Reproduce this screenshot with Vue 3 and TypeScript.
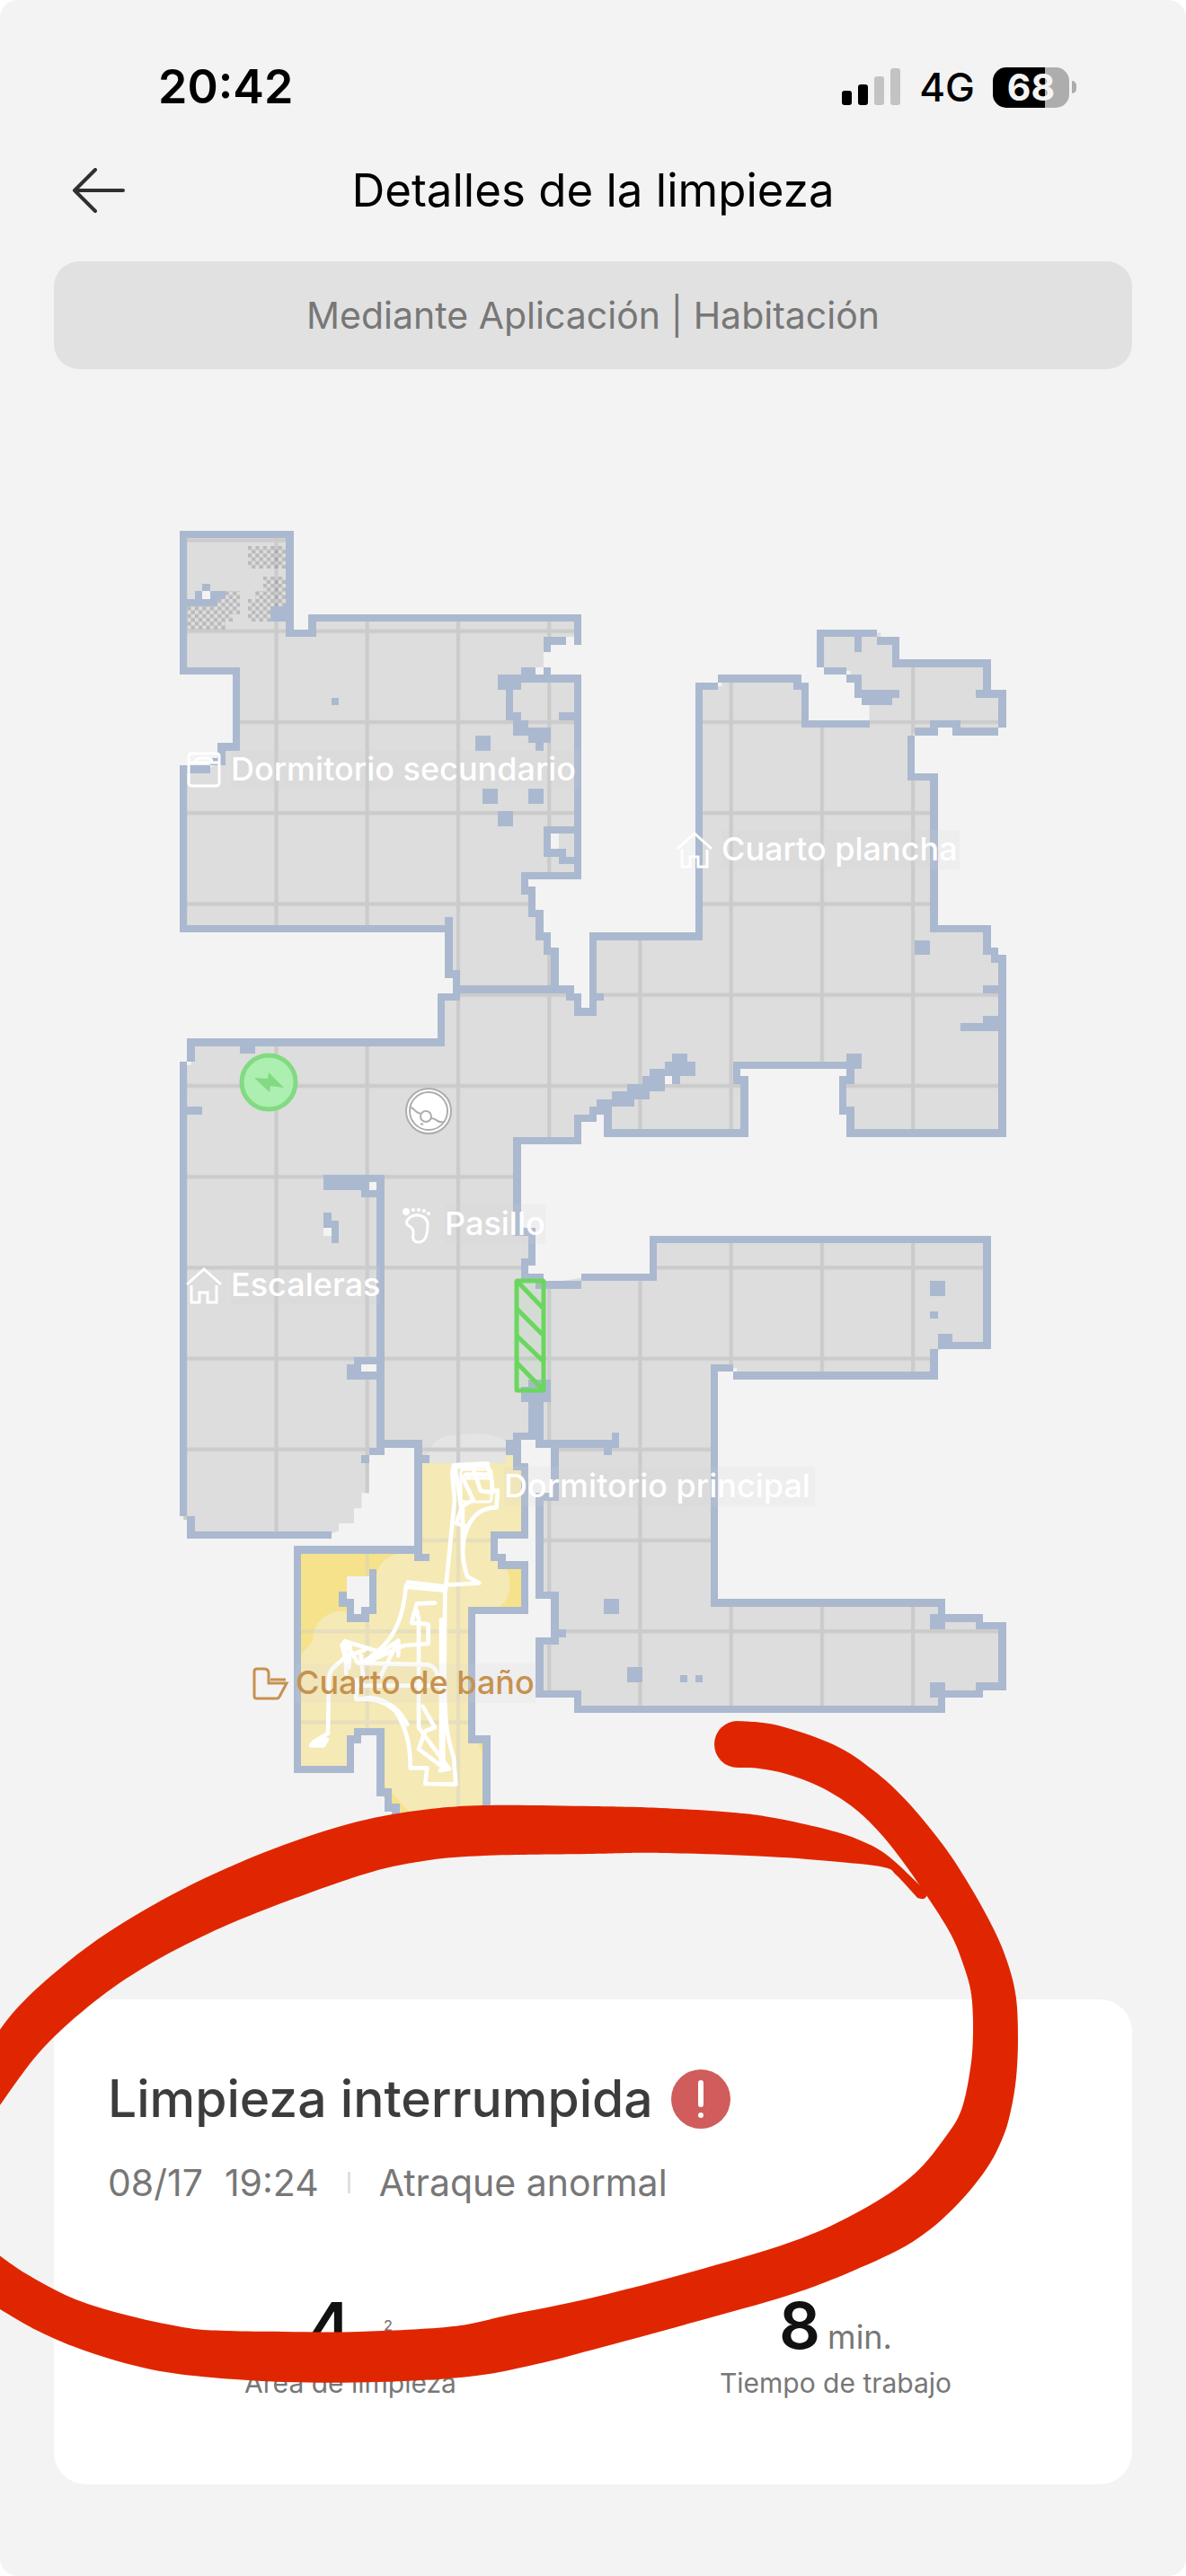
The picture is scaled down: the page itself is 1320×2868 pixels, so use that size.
<script setup lang="ts">
type Point = [number, number]

interface RoomLabel {
  text: string
  x: number
  y: number
  width: number
  icon: 'house' | 'bed' | 'foot' | 'bath'
  iconX: number
  iconY: number
  active?: boolean
}

// Floors and walls are given in map cells; a wall runs through cell centres.
const homeFloors: string[] = [
  '0,0 14,0 14,13 17,13 17,11 52,11 52,13.5 50,13.5 48,14 48,15 47.5,15 47.5,17.5 46,18 46,19 52,19 52,45 45,45 45,47 46,47 46,50 47,50 47,53 48,53 48,55 49,55 49,60 36,60 36,58 35,58 35,52 0,52 0,31 3,31 5,30 5,28 7,28 7,18 0,18',
  '34,61 36,61 36,60 51,60 51,61 52,61 52,63 54,63 54,53 68,53 68,20 71,20 71,19 81,19 81,20 82,20 82,25 90.5,25 90.5,22 90,21 89,21 89,19 88,19 88,18 85,18 84,17 84,13 92,13 92,14 94,14 94,17 106,17 106,21 108,21 108,25.5 102,25.5 102,25 99,25 99,26 96.5,26 96,27 96,32 99,32 99,52 106,52 106,55 107,55 107,56 108,56 108,79 88,79 88,76 87,76 87,72 88,72 88,70 73,70 73,72 74,72 74,79 56,79 56,75 54,76 54,77 52,77 52,80 44,80 44,92 46,92 46,96 45,96 45,98 47,98 47,99 53,98 62,98 62,93 106,93 106,107 101,107 99,108 99,111 73,111 73,110 70,110 70,141 100,141 100,143 105,143 105,144 108,144 108,152 105,152 105,153 100,153 100,155 52,155 52,153 47,153 47,146 49,146 49,140 47,140 47,127 49,127 49,120 47,120 46,119 44,119 44,122.5 31,122.5 31,120 26,120 26,121 24.5,121.5 24.5,126.5 23.5,126.5 23.5,128.5 22.5,128.5 22.5,130.5 20.5,130.5 20.5,131.5 19,132 1,132 1,130 0,130 0,70 1,70 1,67 34,67',
]

const bathFloor =
  '31,122.5 42.5,122.5 42.5,121.5 44,121.5 44,123 45,123 45,132 41,132 41,135 42,135 42,136 45,136 45,142 38,142 38,159 40,159 40,172 28,170 28,168 27,167 26,166 26,158 23,158 22,159 22,163 15,163 15,134 31,134'

const walls: string[] = [
  '3,31 0,31 0,52 35,52',
  '4,30 5,30 5,28 7,28 7,18 0,18 0,0 14,0 14,13 17,13 17,11 52,11 52,14',
  '50,14 48,14 48,15',
  '46,18 46,19',
  '45,18 45,19',
  '48,18 48,19',
  '42,19 52,19 52,45 45,45 45,47 46,47 46,50 47,50 47,53 48,53 48,55 49,55 49,60',
  '42,19 42,20 44,20',
  '43,20 43,24 44,24 44,26 45,26 45,25',
  '46,26 48,26 48,27 46,27',
  '47,27 47,28',
  '50,24 52,24',
  '52,39 48,39 48,42 50,42 50,43 52,43',
  '35,51 35,58 36,58 36,61 34,61 34,67 1,67 1,69',
  '0,70 0,129',
  '36,60 51,60 51,61 52,61 52,63 54,63 54,53 68,53 68,20 70,20',
  '54,61 55,61',
  '71,19 81,19 81,20 82,20 82,25 90,25',
  '85,18 87,18',
  '88,19 89,19 89,21 94,21',
  '90,22 93,22',
  '84,17 84,13 91,13',
  '89,13 89,15',
  '92,14 94,14 94,17 106,17 106,21',
  '105,21 108,21 108,25',
  '97,26 99,26 99,25 102,25 102,26 107,26',
  '96,27 96,32 99,32 99,52 106,52 106,55 107,55 107,56 108,56 108,79 88,79 88,76 87,76 87,72 88,72 88,70',
  '106,60 108,60',
  '106,64 108,64',
  '103,65 108,65',
  '88,69 89,69 89,70 73,70 73,72 74,72 74,79 56,79 56,76',
  '65,69 66,69',
  '64,70 67,70 67,71 62,71',
  '65,71 65,72',
  '61,72 63,72 63,73 59,73',
  '57,74 61,74',
  '55,75 59,75',
  '54,76 55,76',
  '54,76 54,77 52,77 52,80 44,80 44,92 46,92 46,96 45,96 45,98 47,98 47,99 52,99',
  '53,98 62,98 62,93 106,93 106,107 100,107 100,106 101,106',
  '99,108 99,111 73,111',
  '72,110 70,110 70,141 100,141 100,143 105,143 105,144 108,144 108,152 105,152 105,153 100,153 100,155 52,155 52,153 47,153 47,146 49,146 49,140 47,140 47,127 49,127 49,120',
  '99,143 99,144 100,144',
  '99,153 99,152 100,152',
  '49,145 50,145',
  '47,120 57,120 57,119',
  '56,120 56,121',
  '46,112 48,112 48,114 45,114 45,113 48,113',
  '46,114 46,119',
  '47,114 47,120',
  '44,119 46,119',
  '44,119 44,123 45,123 45,132 41,132 41,135 42,135 42,136 45,136 45,142 38,142 38,159 40,159 40,172 28,170 28,168 27,168 27,166 26,166 26,158 23,158 23,159 22,159 22,163 15,163 15,134 31,134',
  '43,120 43,121',
  '26,120 31,120 31,135 32,135',
  '32,122 31,122',
  '19,85 26,85 26,121 25,121',
  '19,86 24,86',
  '24,87 26,87',
  '19,90 19,91',
  '20,91 20,93',
  '26,109 23,109 23,110 22,110 22,111 26,111',
  '8,68 9,68',
  '1,76 2,76',
  '1,130 1,132 19,132',
  '25,137 25,142 24,142 24,143 22,143 22,141 21,141 21,140',
]

// Obstacles: column, row, width, height
const blocks: number[][] = [
  [3, 7, 1, 1], [2, 8, 1, 1], [4, 8, 2, 1], [1, 9, 4, 1], [12, 10, 2, 2],
  [20, 22, 1, 1], [39, 27, 2, 2], [40, 34, 2, 2], [46, 34, 2, 2], [42, 37, 2, 2],
  [97, 54, 2, 2], [24, 122, 1, 1], [99, 99, 2, 2], [99, 103, 1, 1],
  [56, 141, 2, 2], [59, 150, 2, 2], [66, 151, 1, 1], [68, 151, 1, 1],
]

// Unmapped spots inside a floor
const holes: number[][] = [
  [3, 8, 1, 1], [47, 18, 1, 1], [49, 40, 1, 2], [64, 72, 1, 1], [51, 14, 1, 1],
  [25, 86, 1, 1], [19, 92, 1, 1], [24, 110, 2, 1], [22, 138, 3, 3], [22, 140, 3, 1], [23, 141, 2, 1], [23, 142, 1, 1],
]

const carpets: string[] = [
  '9,2 14,2 14,5 9,5',
  '11,6 14,6 14,10 12,10 12,12 9,12 9,9 10,9 10,8 11,8',
  '5,9 6,9 6,8 8,8 8,11 7,11 7,12 6,12 6,13 1,13 1,10 5,10',
]

const labels: RoomLabel[] = [
  { text: 'Dormitorio secundario', x: 257, y: 869, width: 388, icon: 'bed', iconX: 208, iconY: 837 },
  { text: 'Cuarto plancha', x: 803, y: 958, width: 265, icon: 'house', iconX: 753, iconY: 925 },
  { text: 'Pasillo', x: 495, y: 1375, width: 112, icon: 'foot', iconX: 446, iconY: 1344 },
  { text: 'Escaleras', x: 257, y: 1443, width: 166, icon: 'house', iconX: 207, iconY: 1410 },
  { text: 'Dormitorio principal', x: 561, y: 1667, width: 346, icon: 'bed', iconX: 511, iconY: 1634 },
  { text: 'Cuarto de baño', x: 329, y: 1886, width: 268, icon: 'bath', iconX: 281, iconY: 1856, active: true },
]

const stats = [
  { value: '4', unit: 'm', power: '2', label: 'Área de limpieza' },
  { value: '8', unit: 'min.', power: '', label: 'Tiempo de trabajo' },
]

function curve(points: Point[]): string {
  let d = ''
  for (let i = 0; i < points.length - 1; i++) {
    const p0 = points[Math.max(i - 1, 0)]
    const p1 = points[i]
    const p2 = points[i + 1]
    const p3 = points[Math.min(i + 2, points.length - 1)]
    const a = [p1[0] + (p2[0] - p0[0]) / 6, p1[1] + (p2[1] - p0[1]) / 6]
    const b = [p2[0] - (p3[0] - p1[0]) / 6, p2[1] - (p3[1] - p1[1]) / 6]
    d += `C${a[0].toFixed(1)} ${a[1].toFixed(1)} ${b[0].toFixed(1)} ${b[1].toFixed(1)} ${p2[0]} ${p2[1]}`
  }
  return d
}

const sweepOuter: Point[] = [
  [821, 1916], [866, 1921], [929, 1943], [972, 1971], [1009, 2005], [1051, 2056], [1082, 2104], [1108, 2152],
  [1123, 2190], [1131, 2225], [1133, 2270], [1131, 2313], [1125, 2350], [1116, 2380], [1097, 2416], [1060, 2460],
  [1014, 2497], [950, 2528], [879, 2555], [770, 2586], [660, 2616], [589, 2634], [522, 2646], [421, 2652],
  [316, 2652], [236, 2647], [168, 2638], [97, 2618], [42, 2595], [-10, 2565],
]
const sweepInner: Point[] = [
  [-10, 2504], [30, 2532], [84, 2560], [147, 2579], [210, 2592], [252, 2595], [316, 2596], [400, 2596],
  [505, 2590], [568, 2577], [660, 2558], [782, 2526], [892, 2492], [967, 2456], [1018, 2420], [1051, 2381],
  [1070, 2349], [1080, 2303], [1083, 2263], [1081, 2220], [1072, 2187], [1058, 2153], [1031, 2110], [1003, 2070], [976, 2037],
  [948, 2011], [912, 1989], [875, 1975], [845, 1969], [821, 1968],
]
const bandUpper: Point[] = [
  [-10, 2274], [17, 2238], [59, 2198], [118, 2153], [202, 2104], [295, 2062], [387, 2031], [463, 2016],
  [539, 2010], [660, 2011], [736, 2013], [816, 2018], [862, 2024], [921, 2037], [955, 2048], [988, 2066], [1032, 2107],
]
const bandLower: Point[] = [
  [1021, 2113], [998, 2088], [984, 2079], [934, 2073], [854, 2067], [736, 2063], [660, 2064], [539, 2066],
  [471, 2072], [404, 2087], [295, 2126], [223, 2157], [156, 2193], [97, 2235], [42, 2287], [-10, 2358],
]

const sweep = `M821 1916${curve(sweepOuter)}L-10 2504${curve(sweepInner)}A26 26 0 0 1 821 1916Z`
const band = `M-10 2274${curve(bandUpper)}Q1032 2117 1021 2113${curve(bandLower)}Z`

const goBack = () => window.history.back()
</script>

<template>
  <div class="backdrop">
    <main class="page">
      <div class="status-bar">
        <span class="clock">20:42</span>
        <div class="status-icons">
          <svg class="signal" width="66" height="42" viewBox="0 0 66 42" aria-hidden="true">
            <rect x="0" y="25" width="11" height="16" rx="3" />
            <rect x="18" y="18" width="11" height="23" rx="3" />
            <rect class="off" x="36" y="9" width="11" height="32" rx="3" />
            <rect class="off" x="54" y="0" width="11" height="41" rx="3" />
          </svg>
          <span class="network">4G</span>
          <span class="battery"><span class="battery-body">68</span><span class="battery-tip"></span></span>
        </div>
      </div>

      <header class="header">
        <button class="back" type="button" aria-label="Atrás" @click="goBack">
          <svg width="60" height="50" viewBox="0 0 60 50" aria-hidden="true">
            <path d="M57 25H3M26 2L3 25l23 23" />
          </svg>
        </button>
        <h1>Detalles de la limpieza</h1>
      </header>

      <p class="mode">Mediante Aplicación | Habitación</p>

      <svg class="map" viewBox="0 411 1320 1815" role="img" aria-label="Mapa de limpieza">
        <defs>
          <pattern id="grid" width="12" height="12" patternUnits="userSpaceOnUse">
            <path class="grid-line" d="M0 0h.5v12H0zM0 .5h12v.5H0z" />
          </pattern>
          <pattern id="carpet" width="1" height="1" patternUnits="userSpaceOnUse">
            <path d="M0 0h.5v.5H0zM.5 .5h.5v.5H.5z" fill="#000000" fill-opacity="0.16" />
          </pattern>
        </defs>

        <g transform="translate(204.2 595.2) scale(8.436)">
          <polygon v-for="(p, i) in homeFloors" :key="'f' + i" class="floor" :points="p" />
          <polygon class="floor-bath" :points="bathFloor" />
        </g>

        <g transform="translate(260 1570) scale(0.3333)">
          <path class="swept" d="M630 177L645 150C660 110 690 85 730 85C780 78 870 70 908 104V177Z" />
          <path class="missed" d="M220 475H560C505 488 476 520 477 570V680L350 672C295 680 265 720 265 770C240 800 228 810 220 830ZM910 525H965V662H885C932 620 930 570 910 525ZM500 1250C530 1270 560 1320 590 1342H540L500 1290ZM816 1110H836V1190C834 1160 830 1140 816 1110ZM836 1300L820 1330H836Z" />
        </g>

        <g transform="translate(204.2 595.2) scale(8.436)">
          <polygon v-for="(p, i) in homeFloors" :key="'g' + i" fill="url(#grid)" :points="p" />
          <polygon class="bath-grid" fill="url(#grid)" :points="bathFloor" />
          <g transform="translate(-0.5 -0.5)" shape-rendering="crispEdges">
            <polygon v-for="(p, i) in carpets" :key="'c' + i" fill="url(#carpet)" :points="p" />
            <rect v-for="(h, i) in holes" :key="'h' + i" class="hole" :x="h[0]" :y="h[1]" :width="h[2]" :height="h[3]" />
            <rect v-for="(b, i) in blocks" :key="'b' + i" class="block" :x="b[0]" :y="b[1]" :width="b[2]" :height="b[3]" />
          </g>
          <g class="walls" shape-rendering="crispEdges">
            <polyline v-for="(w, i) in walls" :key="'w' + i" :points="w" />
          </g>
        </g>

        <g class="trail" transform="translate(260 1570) scale(0.3333)">
          <path d="M848 178L735 184L730 210L738 300L708 600M740 190L848 184L862 235L865 270L882 268L878 325C830 325 800 350 782 390L744 378L760 330L742 200M765 320V460M782 390C760 440 762 500 780 555L820 578L708 584" />
          <path d="M765 225L800 300L765 320M800 195L825 270L865 275M775 215H850M708 584L702 602L575 590L582 575L700 588M575 590C568 680 540 760 480 805L372 772L362 785L372 825C350 850 318 860 318 900L315 1080L268 1108L258 1120H300L312 1100L270 1110" />
          <path d="M706 600L704 900C706 1060 715 1100 735 1160L742 1250L640 1248L646 1195H590C592 1110 570 1050 540 1005C510 975 470 960 410 966V920H700M693 700V1180L720 1198L690 1204M700 700V1180" />
          <path d="M672 644L612 646L594 710L650 715V780L570 786L440 845L550 770V820M550 770L490 890M372 825L440 800M372 772L415 845L640 850C670 850 680 870 682 900M612 670L618 700V1060L720 1198M632 990L672 1060L640 1072L618 1132L695 1190M372 780L376 880M390 780L385 860M425 820L432 890M410 900V966L455 960C520 965 560 1010 580 1050M482 805L430 845" />
        </g>

        <g class="hatch">
          <rect x="575" y="1426" width="30" height="122" rx="1" />
          <path d="M577 1428L604 1456M575 1457L604 1486M575 1487L604 1515M575 1517L604 1547" />
        </g>

        <g class="dock">
          <circle cx="299" cy="1205" r="30" />
          <path d="M283 1200L298 1201L299 1194L316 1211L301 1209L300 1216Z" />
        </g>

        <g class="robot">
          <circle cx="477" cy="1237" r="25" />
          <circle cx="477" cy="1237" r="21" />
          <path d="M457 1233C462 1234 460 1238 468 1240M480 1245C487 1245 486 1251 494 1249M468 1251L471 1252" />
          <circle cx="474" cy="1243" r="6" />
        </g>

        <g v-for="l in labels" :key="l.text" :class="['room', { active: l.active }]">
          <rect class="room-bg" :x="l.x" :y="l.y - 34" :width="l.width" height="44" />
          <g :transform="`translate(${l.iconX} ${l.iconY})`">
            <path v-if="l.icon === 'house'" d="M1 20L20 3L39 20M6 21V40H15V29H24V40H34V21" />
            <path v-else-if="l.icon === 'bed'" d="M5 2H33Q36 2 36 5V34Q36 38 32 38H6Q2 38 2 34V5Q2 2 5 2ZM2 12H36M10 12Q10 7 15 7H23Q28 7 28 12" />
            <path v-else-if="l.icon === 'bath'" d="M5 2H13Q18 2 18 7V18H38L30 33Q29 35 27 35H5Q2 35 2 32V5Q2 2 5 2ZM20 14H37" />
            <g v-else>
              <path d="M7 15Q12 8 20 9Q31 11 30 22Q29 39 20 39Q12 39 14 29Q15 24 8 20Q6 18 7 15Z" />
              <circle class="toe" cx="6" cy="5" r="4" />
              <circle class="toe" cx="14" cy="3" r="2" />
              <circle class="toe" cx="20" cy="3" r="2" />
              <circle class="toe" cx="26" cy="4" r="2" />
              <circle class="toe" cx="31" cy="7" r="2" />
            </g>
          </g>
          <text :x="l.x" :y="l.y">{{ l.text }}</text>
        </g>
      </svg>

      <section class="card">
        <div class="result">
          <h2>Limpieza interrumpida</h2>
          <svg width="66" height="66" viewBox="0 0 66 66" role="img" aria-label="Error">
            <circle cx="33" cy="33" r="33" fill="#d05c5b" />
            <path d="M33 15V39M33 51V51.100" stroke="#ffffff" stroke-width="6" stroke-linecap="round" />
          </svg>
        </div>
        <div class="meta">
          <span>08/17</span>
          <span class="time">19:24</span>
          <span class="divider"></span>
          <span>Atraque anormal</span>
        </div>
        <dl class="stats">
          <div v-for="s in stats" :key="s.label" class="stat">
            <dd><strong>{{ s.value }}</strong><span :class="['unit', { squared: s.power }]">{{ s.unit }}<sup v-if="s.power">{{ s.power }}</sup></span></dd>
            <dt>{{ s.label }}</dt>
          </div>
        </dl>
      </section>

      <svg class="marker" viewBox="0 0 1320 2868" aria-hidden="true">
        <path :d="sweep" />
        <path :d="band" />
      </svg>
    </main>
  </div>
</template>

<style>
body {
  margin: 0;
  background: #ffffff;
}
</style>

<style scoped>
.backdrop {
  background: #ffffff;
  font-family: Inter, "Liberation Sans", sans-serif;
}

.page {
  position: relative;
  box-sizing: border-box;
  padding-bottom: 102px;
  overflow: hidden;
  border-radius: 20px;
  background: #f3f3f3;
}

.status-bar {
  display: flex;
  align-items: center;
  justify-content: space-between;
  box-sizing: border-box;
  height: 160px;
  padding: 34px 122px 0 176px;
}

.clock {
  font-size: 52px;
  font-weight: 600;
  line-height: 60px;
}

.status-icons {
  display: flex;
  align-items: center;
}

.signal {
  margin-right: 20px;
}

.signal .off {
  fill: #c3c3c3;
}

.network {
  margin-right: 20px;
  font-size: 44px;
  font-weight: 500;
  line-height: 48px;
}

.battery {
  display: flex;
  align-items: center;
  gap: 3px;
}

.battery-body {
  width: 85px;
  border-radius: 15px;
  background: linear-gradient(90deg, #000000 68%, #adadad 68%);
  color: #f4f4f4;
  font-size: 41px;
  font-weight: 700;
  line-height: 45px;
  text-align: center;
}

.battery-tip {
  width: 5px;
  height: 14px;
  border-radius: 0 7px 7px 0;
  background: #adadad;
}

.header {
  display: grid;
  grid-template-columns: 60px 1fr 60px;
  align-items: center;
  height: 104px;
  margin: 0 80px 27px;
}

.back {
  display: flex;
  padding: 0;
  border: 0;
  background: none;
  cursor: pointer;
}

.back path {
  fill: none;
  stroke: #303030;
  stroke-width: 4;
  stroke-linecap: round;
  stroke-linejoin: round;
}

h1 {
  margin: 0;
  color: #000000;
  font-size: 51px;
  font-weight: 400;
  line-height: 60px;
  text-align: center;
}

.mode {
  margin: 0 60px;
  border-radius: 28px;
  background: #e1e1e1;
  color: #777777;
  font-size: 41px;
  line-height: 120px;
  text-align: center;
}

.map {
  display: block;
  width: 100%;
  height: auto;
}

.floor {
  fill: #dddddd;
}

.floor-bath {
  fill: #f5e9b5;
}

.grid-line {
  fill: #cbcbcb;
}

.bath-grid {
  opacity: 0.35;
}

.swept {
  fill: #e4e4e4;
}

.missed {
  fill: #f5e28b;
}

.hole {
  fill: #f3f3f3;
}

.block {
  fill: #aab9cf;
}

.walls {
  fill: none;
  stroke: #aab9cf;
  stroke-width: 1;
  stroke-linecap: square;
  stroke-linejoin: miter;
}

.trail {
  fill: none;
  stroke: #ffffff;
  stroke-width: 14;
  stroke-linecap: round;
  stroke-linejoin: round;
}

.hatch {
  fill: #6bd65c14;
  stroke: #6bd65f;
  stroke-width: 5;
}

.dock circle {
  fill: #adeeb1;
  stroke: #82da82;
  stroke-width: 5;
}

.dock path {
  fill: #82da82;
}

.robot {
  fill: #ffffff;
  stroke: #adadad;
  stroke-width: 2;
}

.room {
  fill: none;
  stroke: #ffffff;
  stroke-width: 3;
}

.room-bg {
  fill: #d2d2de;
  fill-opacity: 0.14;
  stroke: none;
}

.room text {
  fill: #ffffff;
  stroke: none;
  font-size: 36px;
  font-weight: 500;
}

.room .toe {
  fill: #ffffff;
  stroke: none;
}

.room.active {
  stroke: #c6924f;
}

.room.active text {
  fill: #c6924f;
}

.card {
  margin: 0 60px;
  padding: 75px 60px 93px;
  border-radius: 36px;
  background: #ffffff;
}

.result {
  display: flex;
  align-items: center;
  gap: 20px;
}

h2 {
  margin: 0;
  color: #3c3c3c;
  font-size: 57px;
  font-weight: 500;
  line-height: 72px;
}

.meta {
  display: flex;
  align-items: center;
  margin-top: 33px;
  color: #777777;
  font-size: 41px;
  line-height: 48px;
}

.time {
  margin-left: 24px;
}

.divider {
  width: 3px;
  height: 24px;
  margin: 0 32px;
  background: #e0e0e0;
}

.stats {
  display: grid;
  grid-template-columns: 1fr 1fr;
  margin: 99px 0 0;
}

.stat {
  display: flex;
  flex-direction: column;
  align-items: center;
  gap: 8px;
}

dd {
  display: flex;
  align-items: baseline;
  gap: 8px;
  height: 72px;
  margin: 0;
}

dd strong {
  color: #111111;
  font-size: 72px;
  font-weight: 600;
  line-height: 72px;
}

.unit {
  color: #777777;
  font-size: 36px;
  line-height: 36px;
}

.unit.squared {
  font-size: 32px;
}

sup {
  font-size: 16px;
  font-weight: 500;
  line-height: 10px;
  vertical-align: text-top;
}

dt {
  color: #777777;
  font-size: 30px;
  line-height: 40px;
}

.marker {
  position: absolute;
  top: 0;
  left: 0;
  width: 100%;
  pointer-events: none;
}

.marker path {
  fill: #e02600;
}
</style>
